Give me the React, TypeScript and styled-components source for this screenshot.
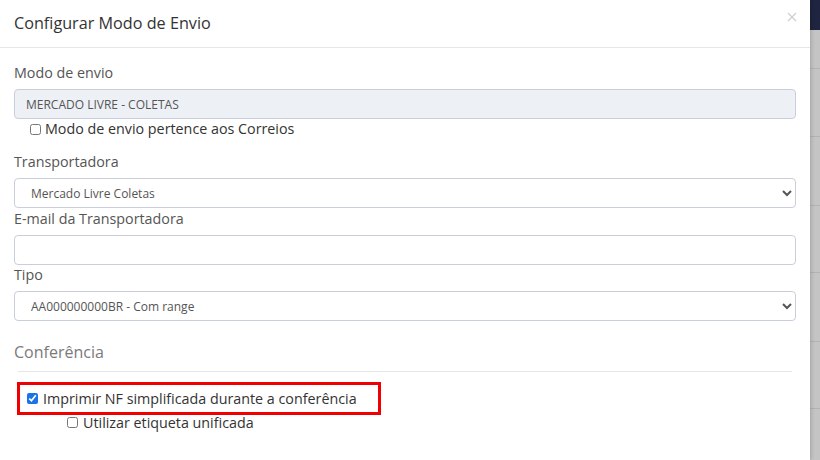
import React from "react";
import styled, { createGlobalStyle } from "styled-components";

const Global = createGlobalStyle`
  html, body { margin: 0; padding: 0; }
  body {
    font-family: "Open Sans", "Liberation Sans", sans-serif;
    background: #c6c6c6;
    overflow: hidden;
  }
  * { box-sizing: border-box; }
`;

const Page = styled.div`
  display: flex;
  width: 820px;
  height: 460px;
`;

const Modal = styled.div`
  width: 810px;
  height: 460px;
  background: #fff;
  position: relative;
  z-index: 1;
  box-shadow: 1px 0 4px rgba(0, 0, 0, 0.18);
  display: flex;
  flex-direction: column;
`;

const Header = styled.div`
  height: 48px;
  border-bottom: 1px solid #e6e6e6;
  padding: 12px 14px 0 14px;
  display: flex;
  justify-content: space-between;
  align-items: flex-start;
`;

const Title = styled.h4`
  margin: 0;
  font-size: 16.2px;
  line-height: 22px;
  font-weight: 400;
  color: #333;
`;

const Close = styled.button`
  border: 0;
  background: none;
  padding: 0;
  margin: 0 -1px 0 0;
  width: 10px;
  height: 10px;
  display: flex;
  cursor: pointer;
`;

const Body = styled.div`
  padding: 15px 14px 0 14px;
  display: flex;
  flex-direction: column;
`;

const Field = styled.div<{ $mb?: number }>`
  display: flex;
  flex-direction: column;
  margin-bottom: ${(p) => p.$mb ?? 0}px;
`;

const Label = styled.label`
  font-size: 14.3px;
  line-height: 20px;
  color: #555;
  margin-bottom: 6px;
`;

const Input = styled.input<{ $h?: number }>`
  height: ${(p) => p.$h ?? 30}px;
  width: 100%;
  border: 1px solid #c9cedc;
  border-radius: 4px;
  padding: 0 11px;
  font-family: "Open Sans", "Liberation Sans", sans-serif;
  font-size: 12px;
  color: #555;
  background: #fff;
  outline: none;
  &:disabled {
    background: #edf0f5;
    color: #555;
    -webkit-text-fill-color: #555;
    opacity: 1;
  }
`;

const Select = styled.select`
  height: 30px;
  width: 100%;
  border: 1px solid #c9cedc;
  border-radius: 4px;
  padding: 0 10px 0 12px;
  font-family: "Open Sans", "Liberation Sans", sans-serif;
  font-size: 12px;
  color: #555;
  background: #fff;
  outline: none;
`;

const CheckRow = styled.label<{ $indent: number; $lh?: number; $mb?: number; $gap?: number }>`
  display: flex;
  align-items: center;
  gap: ${(p) => p.$gap ?? 5}px;
  padding-left: ${(p) => p.$indent}px;
  font-size: 14.3px;
  line-height: ${(p) => p.$lh ?? 20}px;
  color: #333;
  margin-bottom: ${(p) => p.$mb ?? 0}px;
`;

const Check = styled.input.attrs({ type: "checkbox" })`
  width: 11px;
  height: 11px;
  margin: 0;
  accent-color: #1a73e8;
`;

const Legend = styled.div`
  margin-top: 19px;
  font-size: 16px;
  line-height: 24px;
  color: #7a7a7a;
  padding-bottom: 7px;
`;

const Divider = styled.div`
  height: 1px;
  background: #e6e6e6;
  margin: 0 4px 10px 4px;
`;

const Highlight = styled.div`
  width: 364px;
  height: 33px;
  margin-left: 3px;
  border: 3px solid #f00000;
  display: flex;
  align-items: center;
  padding-left: 7px;
`;

const Backdrop = styled.div`
  flex: 1;
  display: flex;
  flex-direction: column;
  background: #c4c4c4;
`;

const NavBar = styled.div`
  height: 30px;
  background: #1f2440;
`;

const BgRow = styled.div<{ $h: number }>`
  height: ${(p) => p.$h}px;
  border-bottom: 1px solid #b3b3b3;
`;

export default function App() {
  return (
    <>
      <Global />
      <Page>
        <Modal>
          <Header>
            <Title>Configurar Modo de Envio</Title>
            <Close aria-label="Fechar">
              <svg width="10" height="10" viewBox="0 0 10 10">
                <path d="M1 1 L9 9 M9 1 L1 9" stroke="#cfcfcf" strokeWidth="1.3" fill="none" />
              </svg>
            </Close>
          </Header>
          <Body>
            <Field>
              <Label>Modo de envio</Label>
              <Input disabled value="MERCADO LIVRE - COLETAS" readOnly />
            </Field>
            <CheckRow $indent={16} $mb={13} $gap={4}>
              <Check />
              Modo de envio pertence aos Correios
            </CheckRow>
            <Field $mb={1}>
              <Label>Transportadora</Label>
              <Select defaultValue="ml">
                <option value="ml">Mercado Livre Coletas</option>
              </Select>
            </Field>
            <Field>
              <Label>E-mail da Transportadora</Label>
              <Input defaultValue="" />
            </Field>
            <Field>
              <Label>Tipo</Label>
              <Select defaultValue="aa">
                <option value="aa">AA000000000BR - Com range</option>
              </Select>
            </Field>
            <Legend>Conferência</Legend>
            <Divider />
            <Highlight>
              <CheckRow $indent={0}>
                <Check defaultChecked />
                Imprimir NF simplificada durante a conferência
              </CheckRow>
            </Highlight>
            <CheckRow $indent={53} $lh={15}>
              <Check />
              Utilizar etiqueta unificada
            </CheckRow>
          </Body>
        </Modal>
        <Backdrop>
          <NavBar />
          <BgRow $h={39} />
          <BgRow $h={68} />
          <BgRow $h={69} />
          <BgRow $h={67} />
          <BgRow $h={69} />
          <BgRow $h={67} />
        </Backdrop>
      </Page>
    </>
  );
}
